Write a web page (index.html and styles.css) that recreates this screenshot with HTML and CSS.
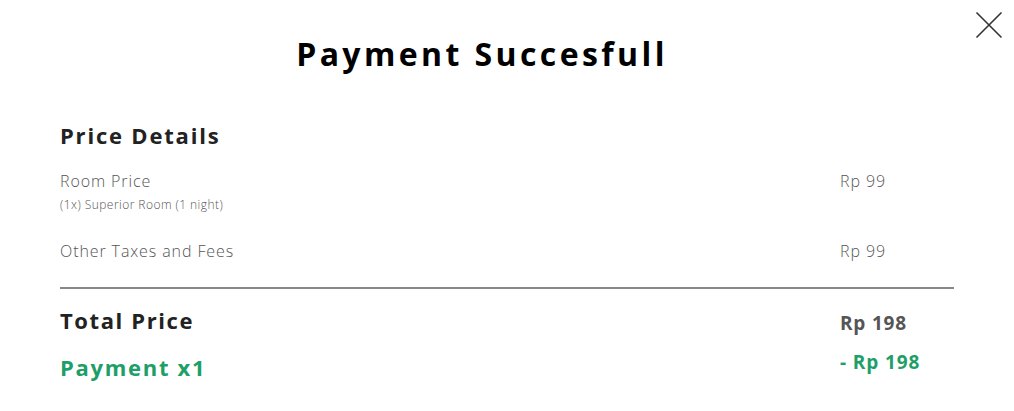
FILE: index.html
```html
<!DOCTYPE html>
<html>
<head>
<meta charset="utf-8">
<link rel="stylesheet" href="styles.css">
</head>
<body>
<div class="modal">
  <button class="close" aria-label="Close">
    <svg width="28" height="28" viewBox="0 0 28 28"><path d="M1.5 1.5 L26.5 26.5 M26.5 1.5 L1.5 26.5" stroke="#333" stroke-width="1.6" fill="none"/></svg>
  </button>
  <div class="head">
    <h1 class="title">Payment Succesfull</h1>
  </div>
  <div class="body">
    <h2 class="section">Price Details</h2>
    <div class="row row-room">
      <div class="label">
        <div class="name">Room Price</div>
        <div class="sub">(1x) Superior Room (1 night)</div>
      </div>
      <div class="amount">Rp 99</div>
    </div>
    <div class="row row-tax">
      <div class="label"><div class="name">Other Taxes and Fees</div></div>
      <div class="amount">Rp 99</div>
    </div>
    <hr class="divider">
    <div class="row total">
      <div class="total-label">Total Price</div>
      <div class="total-amount">Rp 198</div>
    </div>
    <div class="row pay">
      <div class="pay-label">Payment x1</div>
      <div class="pay-amount">- Rp 198</div>
    </div>
  </div>
</div>
</body>
</html>
```
FILE: styles.css
```css
* { box-sizing: border-box; }
html, body { margin: 0; padding: 0; background: #fff; }
body { font-family: "Open Sans", "DejaVu Sans", sans-serif; width: 1014px; height: 411px; overflow: hidden; }
.modal { position: relative; padding-top: 34px; }
.close { position: absolute; top: 11px; right: 11px; width: 28px; height: 28px; padding: 0; border: 0; background: none; cursor: pointer; }
.close svg { display: block; }
.head { padding-right: 50px; text-align: center; }
.title { margin: 0; font-size: 32px; line-height: 40px; font-weight: 700; color: #000; letter-spacing: 3.4px; }
.body { padding: 0 60px; margin-top: 46px; }
.section { margin: 0; font-size: 22px; line-height: 30px; font-weight: 700; color: #222; letter-spacing: 1.8px; }
.row { display: grid; grid-template-columns: 1fr 114px; align-items: start; }
.row-room { margin-top: 20px; }
.name { font-size: 16px; line-height: 22px; font-weight: 300; color: #555; letter-spacing: 0.9px; }
.sub { font-size: 12px; line-height: 14px; font-weight: 300; color: #555; margin-top: 6px; letter-spacing: 0.45px; }
.amount { font-size: 16px; line-height: 22px; font-weight: 300; color: #555; letter-spacing: 0.9px; }
.row-tax { margin-top: 28px; }
.divider { margin: 25px 0 0; border: 0; height: 2px; background: #888; }
.total { margin-top: 16px; }
.total-label { font-size: 22px; line-height: 30px; font-weight: 700; color: #222; letter-spacing: 1.6px; }
.total-amount { font-size: 19px; line-height: 30px; font-weight: 700; color: #555; letter-spacing: 0.8px; padding-top: 3px; }
.pay { margin-top: 14px; }
.pay-label { font-size: 22px; line-height: 30px; font-weight: 700; color: #1e9e68; letter-spacing: 1.7px; }
.pay-amount { font-size: 19px; line-height: 20px; font-weight: 700; color: #1e9e68; letter-spacing: 0.9px; margin-top: 0; }
```
